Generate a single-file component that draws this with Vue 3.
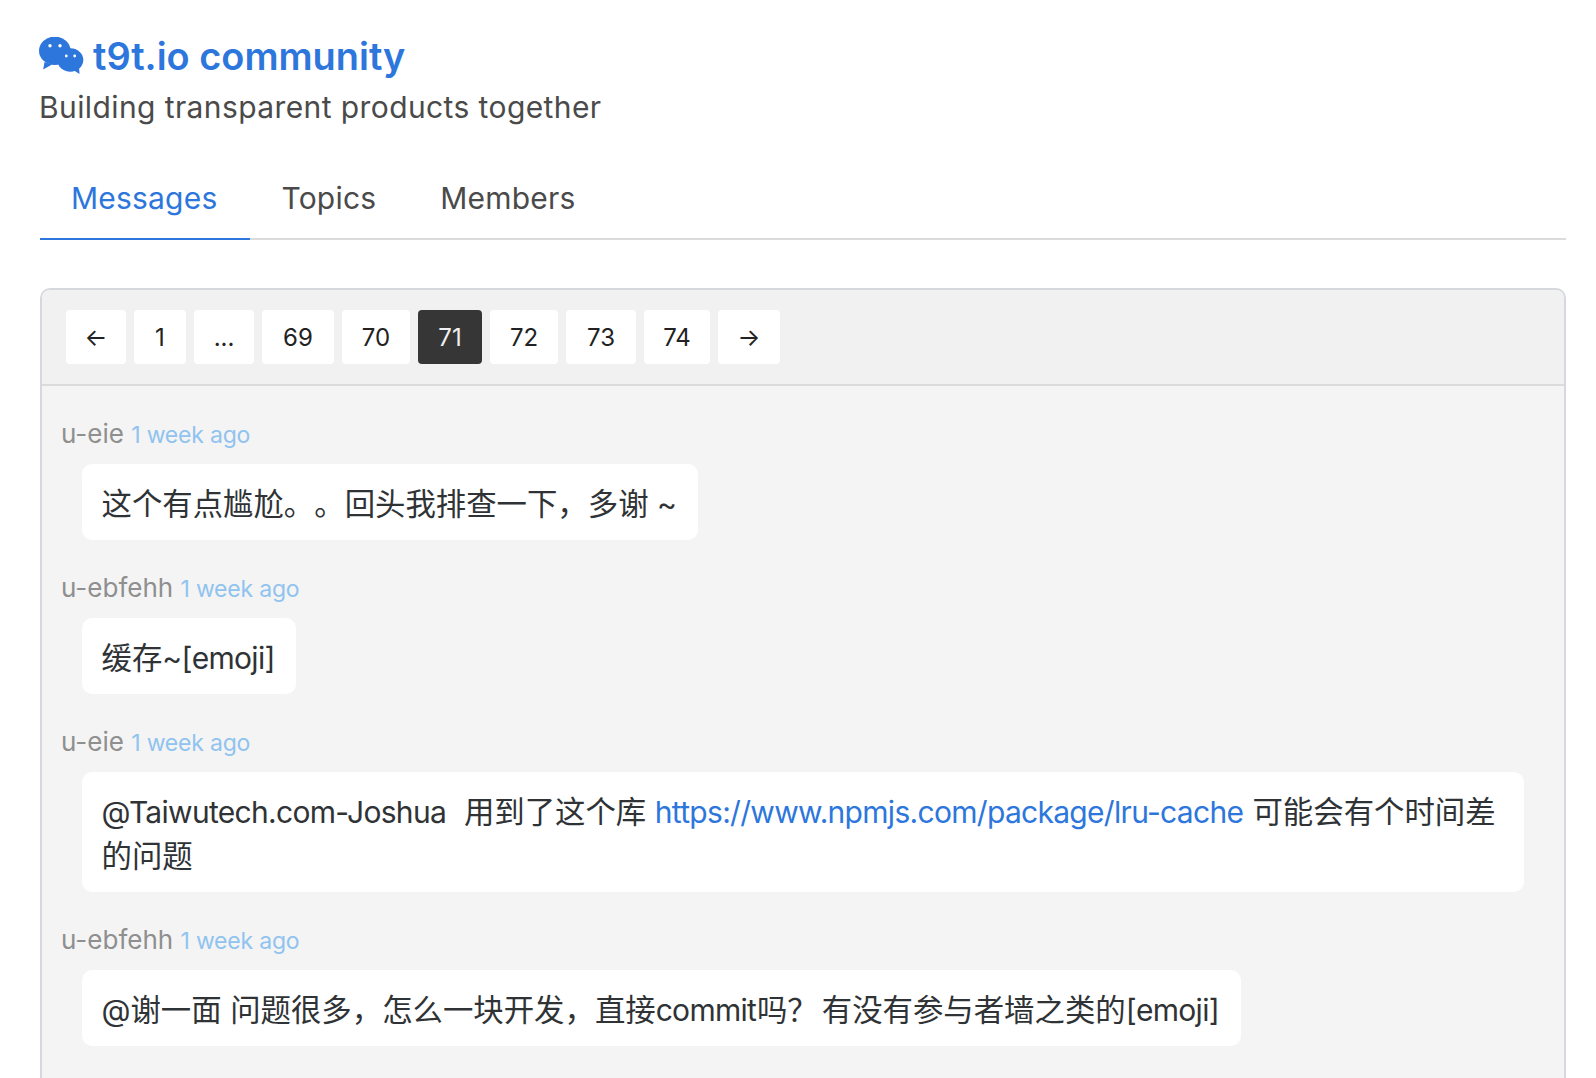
<script setup>
const pages = [
  { label: '←', w: 60 },
  { label: '1', w: 52 },
  { label: '...', w: 60 },
  { label: '69', w: 72 },
  { label: '70', w: 68 },
  { label: '71', w: 64, current: true },
  { label: '72', w: 68 },
  { label: '73', w: 70 },
  { label: '74', w: 66 },
  { label: '→', w: 62 },
]
</script>

<template>
  <div class="page">
    <h1 class="title">
      <svg class="logo" viewBox="38 37 46 38" width="46" height="38">
        <g fill="#2d76dc">
          <ellipse cx="54.800" cy="50.800" rx="15.800" ry="14.200"/>
          <path d="M44.500 62 43.200 69.500 52 64.500z"/>
          <ellipse cx="70.300" cy="60" rx="13" ry="11.700"/>
          <path d="M74 70.500 79.500 74 79 67z"/>
        </g>
        <g fill="#fff">
          <circle cx="50" cy="45.700" r="1.700"/><circle cx="60" cy="45.700" r="1.700"/>
          <circle cx="66.300" cy="56" r="1.400"/><circle cx="74.700" cy="56" r="1.400"/>
        </g>
      </svg>
      <span>t9t.io community</span>
    </h1>
    <p class="subtitle">Building transparent products together</p>

    <nav class="tabs">
      <a class="tab active">Messages</a>
      <a class="tab">Topics</a>
      <a class="tab">Members</a>
    </nav>

    <section class="panel">
      <div class="pager">
        <a
          v-for="p in pages"
          :key="p.label"
          class="pg"
          :class="{ current: p.current }"
          :style="{ width: p.w + 'px' }"
        >{{ p.label }}</a>
      </div>
      <div class="list">
        <article class="msg">
          <div class="meta">u-eie <span class="time">1 week ago</span></div>
          <div class="bubble">这个有点尴尬。。回头我排查一下，多谢 <span class="lat">~</span></div>
        </article>
        <article class="msg">
          <div class="meta">u-ebfehh <span class="time">1 week ago</span></div>
          <div class="bubble">缓存<span class="lat">~[emoji]</span></div>
        </article>
        <article class="msg">
          <div class="meta">u-eie <span class="time">1 week ago</span></div>
          <div class="bubble"><span class="lat">@Taiwutech.com-Joshua</span>&nbsp; 用到了这个库 <a class="link lat">https://www.npmjs.com/package/lru-cache</a> 可能会有个时间差的问题</div>
        </article>
        <article class="msg">
          <div class="meta">u-ebfehh <span class="time">1 week ago</span></div>
          <div class="bubble"><span class="lat">@</span>谢一面 问题很多，怎么一块开发，直接<span class="lat">commit</span>吗<span class="wide">？</span>有没有参与者墙之类的<span class="lat">[emoji]</span></div>
        </article>
      </div>
    </section>
  </div>
</template>

<style>
html, body { margin: 0; background: #fff; overflow: hidden; }
</style>

<style scoped>
.page {
  box-sizing: border-box;
  height: 1078px;
  overflow: hidden;
  display: flex;
  flex-direction: column;
  padding: 30px 30px 0 40px;
  font-family: Inter, "Noto Sans CJK SC", sans-serif;
  color: #4a4a4a;
}
.title {
  margin: 0;
  display: flex;
  align-items: center;
  gap: 9px;
  font-size: 37.900px;
  line-height: 52px;
  font-weight: 600;
  color: #2d76dc;
}
.logo { flex: none; margin-left: -2px; }
.subtitle {
  margin: 1px 0 0 -1px;
  font-size: 30px;
  line-height: 48px;
  letter-spacing: .4px;
  color: #4a4a4a;
}
.tabs {
  display: flex;
  margin-top: 29px;
  border-bottom: 2px solid #dbdbdb;
}
.tab {
  padding: 15px 33px 17px 31px;
  font-size: 30px;
  line-height: 46px;
  letter-spacing: .2px;
  margin-bottom: -2px;
  border-bottom: 2px solid transparent;
}
.tab.active { color: #2d76dc; border-bottom-color: #2d76dc; }
.panel {
  flex: 1;
  margin-top: 48px;
  border: 2px solid #d5d8dc;
  border-bottom: 0;
  border-radius: 10px 10px 0 0;
  background: #f4f4f4;
}
.pager {
  display: flex;
  gap: 8px;
  padding: 20px 24px;
  background: #f1f1f1;
  border-bottom: 2px solid #dbdbdb;
  border-radius: 8px 8px 0 0;
}
.pg {
  box-sizing: border-box;
  height: 54px;
  line-height: 56px;
  text-align: center;
  background: #fff;
  border-radius: 4px;
  font-size: 24px;
  color: #222;
}
.pg.current { background: #363636; color: #f0f0f0; }
.list { padding: 33px 40px 0 19px; }
.msg { margin-bottom: 33px; }
.meta {
  font-size: 26px;
  line-height: 30px;
  color: #8f8f8f;
}
.time { font-size: 23px; line-height: 1; letter-spacing: -.2px; color: #90c3ef; }
.bubble {
  margin-top: 15px;
  margin-left: 21px;
  width: fit-content;
  padding: 18px 21px 14px 19.500px;
  background: #fff;
  border-radius: 10px;
  font-size: 30.400px;
  line-height: 44px;
  color: #303336;
  text-spacing-trim: space-all;
}
.lat { font-size: 30px; line-height: 1; letter-spacing: -.7px; padding-right: .7px; }
.wide { letter-spacing: 4px; }
.link { color: #2d76dc; }
</style>
